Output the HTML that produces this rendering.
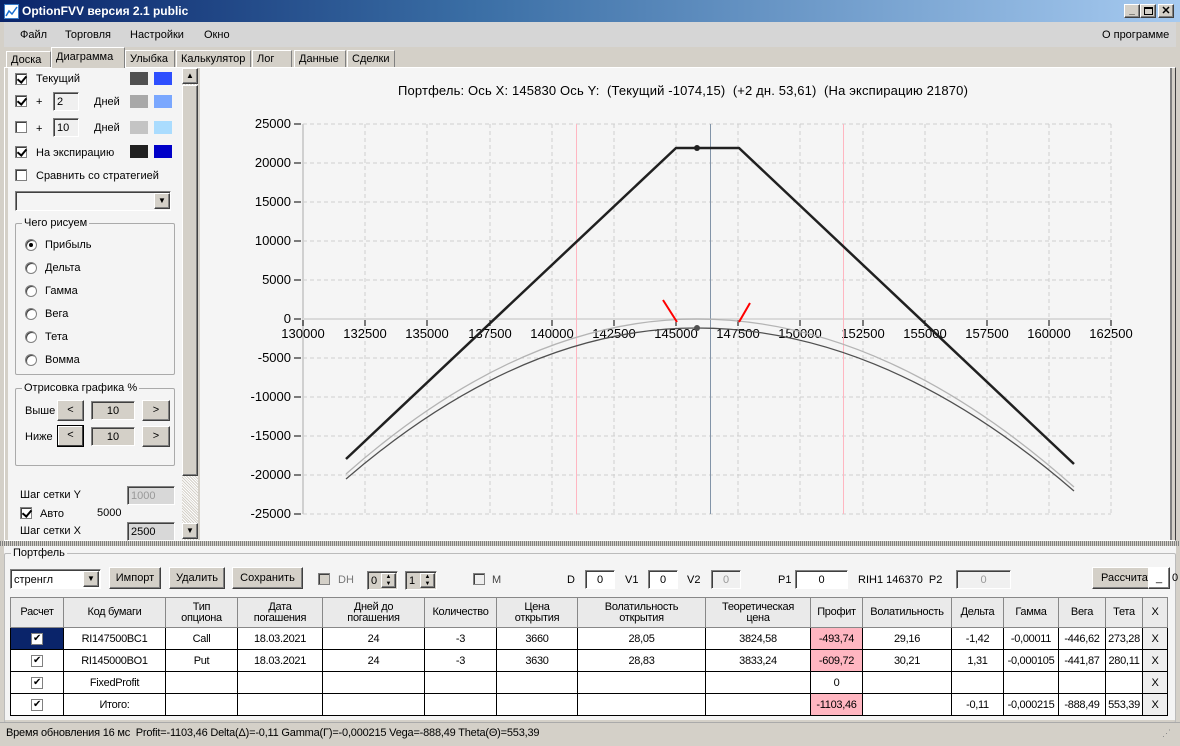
<!DOCTYPE html>
<html><head><meta charset="utf-8">
<style>
*{box-sizing:border-box;margin:0;padding:0}
body{width:1180px;height:746px;overflow:hidden;background:#d4d0c8;font-family:"Liberation Sans",sans-serif;font-size:11px;color:#000;position:relative}
.a{position:absolute}
.t{position:absolute;white-space:nowrap}
.cb{position:absolute;width:12px;height:12px;border:1px solid #808080;background:#fff;box-shadow:inset 1px 1px 0 #404040}
.cb.on::after{content:"";position:absolute;left:3px;top:0px;width:4px;height:7px;border:solid #000;border-width:0 2px 2px 0;transform:rotate(40deg)}
.cb.dis{background:#d4d0c8}
.sw{position:absolute;width:18px;height:13px}
.in{position:absolute;background:#f0f0f0;border:1px solid #808080;border-right-color:#fff;border-bottom-color:#fff;box-shadow:inset 1px 1px 0 #404040;padding:2px 3px 0;font-size:11px;line-height:14px}
.btn{position:absolute;background:#d4d0c8;border:1px solid #fff;border-right-color:#404040;border-bottom-color:#404040;box-shadow:inset -1px -1px 0 #808080;text-align:center;font-size:11px}
.rb{position:absolute;width:12px;height:12px;border-radius:50%;background:#fff;border:1px solid #808080;box-shadow:inset 1px 1px 0 #404040}
.rb.on::after{content:"";position:absolute;left:3px;top:3px;width:4px;height:4px;border-radius:50%;background:#000}
.grp{position:absolute;border:1px solid #aaa;border-radius:2px}
.grp>span{position:absolute;top:-7px;left:6px;background:#f4f4f4;padding:0 2px}
table{border-collapse:collapse;position:absolute;left:10px;top:597px;font-size:11px;letter-spacing:-0.3px}
td{border:1px solid #000;text-align:center;height:22px;background:#fff;padding:0;overflow:hidden;white-space:nowrap}
tr.h td{background:#eaeaea;height:30px;border-color:#888;line-height:11px}
.pk{background:#ffb6c1!important}
.tab{position:absolute;top:50px;height:17px;border:1px solid #fff;border-right-color:#808080;border-bottom:none;background:#d4d0c8;padding:2px 4px;font-size:11px}
</style></head><body>
<div class="a" style="left:0;top:0;width:1180px;height:22px;background:linear-gradient(90deg,#0a246a,#3a6ea5 40%,#a6caf0)"></div>
<div class="a" style="left:4px;top:4px;width:15px;height:15px;background:#fff;border:1px solid #3a7cc8"><svg width="13" height="13"><path d="M1 11 L4 6 L7 9 L12 2" stroke="#1a6fd0" stroke-width="1.5" fill="none"/></svg></div>
<div class="t" style="left:22px;top:4px;color:#fff;font-weight:bold;font-size:12px">OptionFVV версия 2.1 public</div>
<div class="btn" style="left:1124px;top:4px;width:16px;height:14px;font-size:10px;line-height:12px;font-weight:bold">_</div>
<div class="btn" style="left:1140px;top:4px;width:16px;height:14px"><div class="a" style="left:3px;top:2px;width:9px;height:8px;border:1px solid #000;border-top-width:2px"></div></div>
<div class="btn" style="left:1158px;top:4px;width:16px;height:14px;font-weight:bold;line-height:12px">✕</div>
<div class="a" style="left:4px;top:22px;width:1172px;height:25px;background:#d6d6d6"></div>
<div class="t" style="left:20px;top:29px">Файл</div>
<div class="t" style="left:65px;top:29px">Торговля</div>
<div class="t" style="left:130px;top:29px">Настройки</div>
<div class="t" style="left:204px;top:29px">Окно</div>
<div class="t" style="left:1102px;top:29px">О программе</div>
<div class="tab" style="left:6px;top:51px;width:45px">Доска</div>
<div class="tab" style="left:51px;top:47px;height:21px;width:74px;padding-top:3px;z-index:2">Диаграмма</div>
<div class="tab" style="left:125px;width:50px">Улыбка</div>
<div class="tab" style="left:176px;width:75px">Калькулятор</div>
<div class="tab" style="left:252px;width:40px">Лог</div>
<div class="tab" style="left:294px;width:52px">Данные</div>
<div class="tab" style="left:347px;width:48px">Сделки</div>
<div class="a" style="left:4px;top:67px;width:1172px;height:474px;border:1px solid #fff;border-right-color:#404040;background:#d4d0c8"></div>
<div class="a" style="left:8px;top:68px;width:174px;height:472px;background:#f4f4f4"></div>
<div class="cb on" style="left:15px;top:73px"></div><div class="t" style="left:36px;top:73px">Текущий</div>
<div class="sw" style="left:130px;top:72px;background:#505050"></div><div class="sw" style="left:154px;top:72px;background:#2e4ffe"></div>
<div class="cb on" style="left:15px;top:95px"></div><div class="t" style="left:36px;top:96px">+</div>
<div class="in" style="left:53px;top:92px;width:26px;height:19px">2</div><div class="t" style="left:94px;top:96px">Дней</div>
<div class="sw" style="left:130px;top:95px;background:#a8a8a8"></div><div class="sw" style="left:154px;top:95px;background:#7aa7fe"></div>
<div class="cb" style="left:15px;top:121px"></div><div class="t" style="left:36px;top:123px">+</div>
<div class="in" style="left:53px;top:118px;width:26px;height:19px">10</div><div class="t" style="left:94px;top:122px">Дней</div>
<div class="sw" style="left:130px;top:121px;background:#c4c4c4"></div><div class="sw" style="left:154px;top:121px;background:#aadcfe"></div>
<div class="cb on" style="left:15px;top:146px"></div><div class="t" style="left:36px;top:147px">На экспирацию</div>
<div class="sw" style="left:130px;top:145px;background:#202020"></div><div class="sw" style="left:154px;top:145px;background:#0000c8"></div>
<div class="cb" style="left:15px;top:169px"></div><div class="t" style="left:36px;top:170px">Сравнить со стратегией</div>
<div class="in" style="left:15px;top:191px;width:156px;height:20px;background:#f4f4f4"></div>
<div class="btn" style="left:154px;top:193px;width:16px;height:16px;font-size:8px;line-height:14px">▼</div>
<div class="grp" style="left:15px;top:223px;width:160px;height:152px"><span>Чего рисуем</span></div>
<div class="rb on" style="left:25px;top:239px"></div><div class="t" style="left:45px;top:239px">Прибыль</div>
<div class="rb" style="left:25px;top:262px"></div><div class="t" style="left:45px;top:262px">Дельта</div>
<div class="rb" style="left:25px;top:285px"></div><div class="t" style="left:45px;top:285px">Гамма</div>
<div class="rb" style="left:25px;top:308px"></div><div class="t" style="left:45px;top:308px">Вега</div>
<div class="rb" style="left:25px;top:331px"></div><div class="t" style="left:45px;top:331px">Тета</div>
<div class="rb" style="left:25px;top:354px"></div><div class="t" style="left:45px;top:354px">Вомма</div>
<div class="grp" style="left:15px;top:388px;width:160px;height:78px"><span>Отрисовка графика %</span></div>
<div class="t" style="left:25px;top:405px">Выше</div>
<div class="btn" style="left:57px;top:400px;width:27px;height:21px;line-height:19px">&lt;</div>
<div class="in" style="left:91px;top:401px;width:44px;height:19px;background:#d4d0c8;text-align:center">10</div>
<div class="btn" style="left:142px;top:400px;width:28px;height:21px;line-height:19px">&gt;</div>
<div class="t" style="left:25px;top:431px">Ниже</div>
<div class="btn" style="left:57px;top:425px;width:27px;height:22px;line-height:19px;border:1px solid #000;box-shadow:inset -1px -1px 0 #404040,inset 1px 1px 0 #fff">&lt;</div>
<div class="in" style="left:91px;top:427px;width:44px;height:19px;background:#d4d0c8;text-align:center">10</div>
<div class="btn" style="left:142px;top:426px;width:28px;height:21px;line-height:19px">&gt;</div>
<div class="t" style="left:20px;top:489px">Шаг сетки Y</div>
<div class="in" style="left:127px;top:486px;width:48px;height:19px;background:#d8d8d8;color:#999">1000</div>
<div class="cb on" style="left:20px;top:507px"></div><div class="t" style="left:40px;top:508px">Авто</div>
<div class="t" style="left:97px;top:507px">5000</div>
<div class="t" style="left:20px;top:525px">Шаг сетки X</div>
<div class="in" style="left:127px;top:522px;width:48px;height:19px;background:#d8d8d8">2500</div>
<div class="a" style="left:182px;top:68px;width:16px;height:472px;background:repeating-linear-gradient(45deg,#d4d0c8 0 1px,#fff 1px 2px)"></div>
<div class="btn" style="left:182px;top:68px;width:16px;height:16px;font-size:8px;line-height:14px">▲</div>
<div class="btn" style="left:182px;top:85px;width:16px;height:391px"></div>
<div class="btn" style="left:182px;top:523px;width:16px;height:16px;font-size:8px;line-height:14px">▼</div>
<div class="a" style="left:200px;top:68px;width:972px;height:472px;background:#f5f5f5;border-right:2px solid #808080"></div>
<div class="t" style="left:398px;top:83px;font-size:13px;letter-spacing:0.15px">Портфель: Ось X: 145830 Ось Y:&nbsp; (Текущий -1074,15)&nbsp; (+2 дн. 53,61)&nbsp; (На экспирацию 21870)</div>
<svg class="a" style="left:0;top:0" width="1180" height="746" font-family="Liberation Sans" font-size="13">
<g stroke="#cfcfcf" stroke-dasharray="4,3" stroke-width="1">
<path d="M365 124V514M427 124V514M490 124V514M552 124V514M614 124V514M676 124V514M738 124V514M800 124V514M863 124V514M925 124V514M987 124V514M1049 124V514M1111 124V514"/>
<path d="M303 124H1111M303 163H1111M303 202H1111M303 241H1111M303 280H1111M303 358H1111M303 397H1111M303 436H1111M303 475H1111M303 514H1111"/>
</g>
<path d="M303 124V514" stroke="#d0d0d0" stroke-width="2"/>
<path d="M303 319H1111" stroke="#dadada" stroke-width="2"/>
<g stroke="#000"><path d="M294 124H301M294 163H301M294 202H301M294 241H301M294 280H301M294 319H301M294 358H301M294 397H301M294 436H301M294 475H301M294 514H301"/>
<path d="M303 320V326M365 320V326M427 320V326M490 320V326M552 320V326M614 320V326M676 320V326M738 320V326M800 320V326M863 320V326M925 320V326M987 320V326M1049 320V326M1111 320V326"/></g>
<g text-anchor="end"><text x="291" y="128">25000</text><text x="291" y="167">20000</text><text x="291" y="206">15000</text><text x="291" y="245">10000</text><text x="291" y="284">5000</text><text x="291" y="323">0</text><text x="291" y="362">-5000</text><text x="291" y="401">-10000</text><text x="291" y="440">-15000</text><text x="291" y="479">-20000</text><text x="291" y="518">-25000</text></g>
<g text-anchor="middle"><text x="303" y="338">130000</text><text x="365" y="338">132500</text><text x="427" y="338">135000</text><text x="490" y="338">137500</text><text x="552" y="338">140000</text><text x="614" y="338">142500</text><text x="676" y="338">145000</text><text x="738" y="338">147500</text><text x="800" y="338">150000</text><text x="863" y="338">152500</text><text x="925" y="338">155000</text><text x="987" y="338">157500</text><text x="1049" y="338">160000</text><text x="1111" y="338">162500</text></g>
<path d="M576.5 124V514M843.5 124V514" stroke="#ffb6c1"/>
<path d="M710.5 124V514" stroke="#8294a8"/>
<path d="M346 474Q521.5 319 697 319Q885.5 319 1074 487" stroke="#b4b4b4" stroke-width="1.3" fill="none"/>
<path d="M346 479Q521.5 328 697 328Q885.5 328 1074 491" stroke="#505050" stroke-width="1.3" fill="none"/>
<path d="M346 459L676 148L739 148L1074 464" stroke="#202020" stroke-width="2.5" fill="none" stroke-linejoin="round"/>
<circle cx="697" cy="148" r="3" fill="#202020"/><circle cx="697" cy="328" r="3" fill="#505050"/>
<path d="M663 300L677 322M750 303L739 322" stroke="#f00" stroke-width="2"/>
</svg>
<div class="a" style="left:0;top:541px;width:1180px;height:5px;background:repeating-linear-gradient(90deg,#808080 0 1px,#d4d0c8 1px 2px)"></div>
<div class="a" style="left:4px;top:546px;width:1172px;height:174px;background:#f4f4f4"></div>
<div class="grp" style="left:4px;top:553px;width:1172px;height:170px;border-color:#bbb"><span>Портфель</span></div>
<div class="in" style="left:10px;top:569px;width:91px;height:20px;background:#fff;padding-top:3px">стренгл</div>
<div class="btn" style="left:83px;top:571px;width:16px;height:16px;font-size:8px;line-height:14px">▼</div>
<div class="btn" style="left:109px;top:567px;width:52px;height:22px;line-height:20px">Импорт</div>
<div class="btn" style="left:169px;top:567px;width:56px;height:22px;line-height:20px">Удалить</div>
<div class="btn" style="left:232px;top:567px;width:71px;height:22px;line-height:20px">Сохранить</div>
<div class="cb dis" style="left:318px;top:573px"></div><div class="t" style="left:338px;top:574px;color:#777">DH</div>
<div class="in" style="left:367px;top:571px;width:31px;height:19px;background:#d4d0c8">0</div>
<div class="btn" style="left:381px;top:573px;width:15px;height:15px;font-size:6px;line-height:7px">▲<br>▼</div>
<div class="in" style="left:405px;top:571px;width:32px;height:19px;background:#d4d0c8">1</div>
<div class="btn" style="left:420px;top:573px;width:15px;height:15px;font-size:6px;line-height:7px">▲<br>▼</div>
<div class="cb dis" style="left:473px;top:573px;background:#eee"></div><div class="t" style="left:492px;top:574px;color:#444">M</div>
<div class="t" style="left:567px;top:574px">D</div><div class="in" style="left:585px;top:570px;width:30px;height:19px;background:#fff;text-align:center">0</div>
<div class="t" style="left:625px;top:574px">V1</div><div class="in" style="left:648px;top:570px;width:30px;height:19px;background:#fff;text-align:center">0</div>
<div class="t" style="left:687px;top:574px">V2</div><div class="in" style="left:711px;top:570px;width:30px;height:19px;color:#999;text-align:center">0</div>
<div class="t" style="left:778px;top:574px">P1</div><div class="in" style="left:795px;top:570px;width:53px;height:19px;background:#fff;text-align:center">0</div>
<div class="t" style="left:858px;top:574px">RIH1 146370&nbsp; P2</div><div class="in" style="left:956px;top:570px;width:55px;height:19px;color:#999;text-align:center">0</div>
<div class="btn" style="left:1092px;top:567px;width:58px;height:22px;line-height:20px;overflow:hidden;text-align:left;padding-left:8px">Рассчитать</div>
<div class="btn" style="left:1148px;top:567px;width:22px;height:22px;line-height:20px;background:#fff">_</div>
<div class="t" style="left:1172px;top:572px">0</div>
<table>
<colgroup><col style="width:53px"><col style="width:102px"><col style="width:72px"><col style="width:85px"><col style="width:102px"><col style="width:72px"><col style="width:81px"><col style="width:128px"><col style="width:105px"><col style="width:52px"><col style="width:89px"><col style="width:52px"><col style="width:55px"><col style="width:47px"><col style="width:37px"><col style="width:25px"></colgroup>
<tr class="h"><td>Расчет</td><td>Код бумаги</td><td>Тип<br>опциона</td><td>Дата<br>погашения</td><td>Дней до<br>погашения</td><td>Количество</td><td>Цена<br>открытия</td><td>Волатильность<br>открытия</td><td>Теоретическая<br>цена</td><td>Профит</td><td>Волатильность</td><td>Дельта</td><td>Гамма</td><td>Вега</td><td>Тета</td><td>X</td></tr>
<tr><td style="background:#0a246a"><span style="display:inline-block;width:12px;height:12px;background:#fff;border:1px solid #808080;font-size:10px;line-height:10px;color:#000">✔</span></td><td>RI147500BC1</td><td>Call</td><td>18.03.2021</td><td>24</td><td>-3</td><td>3660</td><td>28,05</td><td>3824,58</td><td class="pk">-493,74</td><td>29,16</td><td>-1,42</td><td>-0,00011</td><td>-446,62</td><td>273,28</td><td style="background:#eee">X</td></tr>
<tr><td><span style="display:inline-block;width:12px;height:12px;border:1px solid #808080;font-size:10px;line-height:10px">✔</span></td><td>RI145000BO1</td><td>Put</td><td>18.03.2021</td><td>24</td><td>-3</td><td>3630</td><td>28,83</td><td>3833,24</td><td class="pk">-609,72</td><td>30,21</td><td>1,31</td><td>-0,000105</td><td>-441,87</td><td>280,11</td><td style="background:#eee">X</td></tr>
<tr><td><span style="display:inline-block;width:12px;height:12px;border:1px solid #808080;font-size:10px;line-height:10px">✔</span></td><td>FixedProfit</td><td></td><td></td><td></td><td></td><td></td><td></td><td></td><td>0</td><td></td><td></td><td></td><td></td><td></td><td style="background:#eee">X</td></tr>
<tr><td><span style="display:inline-block;width:12px;height:12px;border:1px solid #808080;font-size:10px;line-height:10px">✔</span></td><td>Итого:</td><td></td><td></td><td></td><td></td><td></td><td></td><td></td><td class="pk">-1103,46</td><td></td><td>-0,11</td><td>-0,000215</td><td>-888,49</td><td>553,39</td><td style="background:#eee">X</td></tr>
</table>
<div class="a" style="left:0;top:722px;width:1180px;height:24px;background:#d4d0c8;border-top:1px solid #aaa"></div>
<div class="t" style="left:6px;top:727px;letter-spacing:-0.2px">Время обновления 16 мс&nbsp; Profit=-1103,46 Delta(Δ)=-0,11 Gamma(Γ)=-0,000215 Vega=-888,49 Theta(Θ)=553,39</div>
<div class="t" style="left:1162px;top:728px;color:#888;font-size:9px">⋰</div>
</body></html>
